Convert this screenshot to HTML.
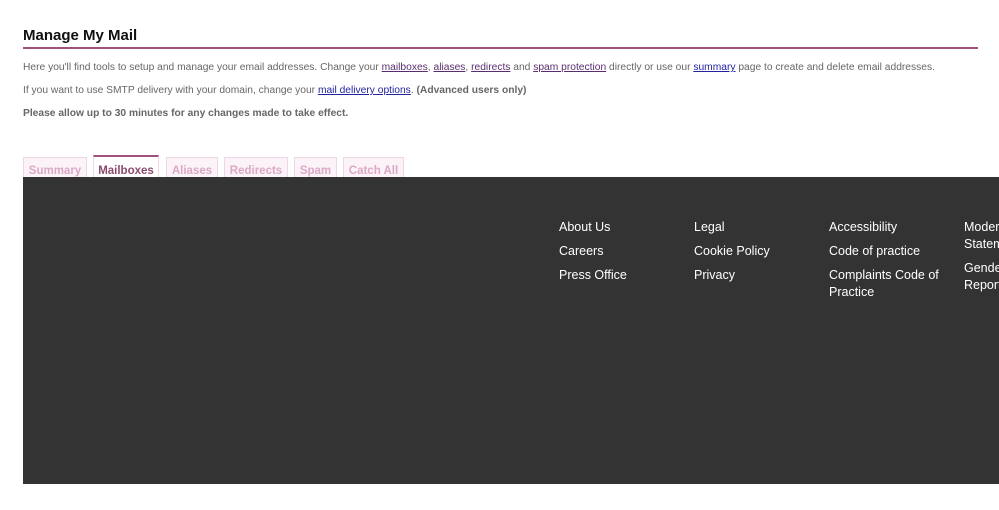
<!DOCTYPE html>
<html><head><style>
html,body{margin:0;padding:0;width:999px;height:510px;overflow:hidden;background:#fff;font-family:"Liberation Sans",Arial,sans-serif}
h1{position:absolute;left:23px;top:27px;margin:0;font-size:15px;font-weight:bold;color:#111}
.rule{position:absolute;left:23px;top:47px;width:955px;height:2px;background:#a0527e}
p{position:absolute;left:23px;margin:0;font-size:10.25px;color:#666;white-space:nowrap}
a{color:#5a2d6e;text-decoration:underline}
a.b{color:#2323a0}
.tab{position:absolute;top:157px;height:20px;box-sizing:border-box;border:1px solid #efd6e4;border-bottom:none;background:#fbf3f7;color:#dba8c6;font-size:11.5px;font-weight:bold;text-align:center;line-height:27px;overflow:hidden}
.tab.act{background:#fff;border-top:2px solid #a0527e;color:#8a4a6e;top:155px;height:22px;line-height:29px}
.foot{position:absolute;left:23px;top:177px;width:976px;height:307px;background:#333;overflow:hidden}
.col{position:absolute;top:42px;color:#fff;font-size:12.5px;line-height:17px;white-space:nowrap}
.col div{margin-bottom:7px}
</style></head><body>
<h1>Manage My Mail</h1>
<div class="rule"></div>
<p style="top:62px">Here you'll find tools to setup and manage your email addresses. Change your <a>mailboxes</a>, <a>aliases</a>, <a>redirects</a> and <a>spam protection</a> directly or use our <a class="b">summary</a> page to create and delete email addresses.</p>
<p style="top:85px">If you want to use SMTP delivery with your domain, change your <a class="b">mail delivery options</a>. <b>(Advanced users only)</b></p>
<p style="top:108px"><b>Please allow up to 30 minutes for any changes made to take effect.</b></p>
<div class="tab" style="left:23px;width:64px">Summary</div>
<div class="tab act" style="left:93px;width:66px">Mailboxes</div>
<div class="tab" style="left:166px;width:52px">Aliases</div>
<div class="tab" style="left:224px;width:64px">Redirects</div>
<div class="tab" style="left:294px;width:43px">Spam</div>
<div class="tab" style="left:343px;width:61px">Catch All</div>
<div class="foot">
<div class="col" style="left:536px"><div>About Us</div><div>Careers</div><div>Press Office</div></div>
<div class="col" style="left:671px"><div>Legal</div><div>Cookie Policy</div><div>Privacy</div></div>
<div class="col" style="left:806px"><div>Accessibility</div><div>Code of practice</div><div>Complaints Code of<br>Practice</div></div>
<div class="col" style="left:941px"><div>Modern Slavery<br>Statement</div><div>Gender Pay<br>Report</div></div>
</div>
</body></html>
